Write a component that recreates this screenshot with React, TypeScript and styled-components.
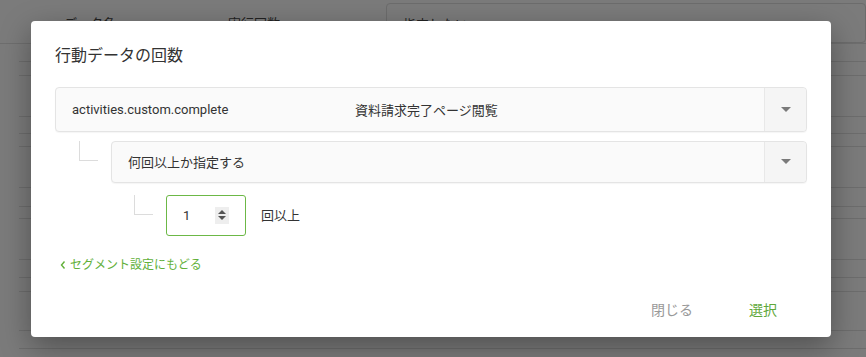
import React from 'react'
import styled, { createGlobalStyle } from 'styled-components'

const GlobalStyle = createGlobalStyle`
    body {
        margin: 0;
        font-family: Roboto, "Noto Sans CJK JP", sans-serif;
        color: #333;
    }
`

const bgLines = [18, 14, 41, 17, 13, 41, 19, 12, 41, 18, 14, 39, 18]

function App() {
    return (
        <Page>
            <GlobalStyle />
            <Backdrop>
                <BgHeader>
                    <BgLabel>データ名</BgLabel>
                    <BgLabel>実行回数</BgLabel>
                    <BgCard>指定しない</BgCard>
                </BgHeader>
                <BgRows>
                    {bgLines.map((h, i) => (
                        <BgRow key={i} $h={h} />
                    ))}
                </BgRows>
            </Backdrop>
            <Overlay>
                <Modal>
                    <Title>行動データの回数</Title>
                    <Select>
                        <SelectValue>
                            <Key>activities.custom.complete</Key>
                            <span>資料請求完了ページ閲覧</span>
                        </SelectValue>
                        <SelectToggle><Caret /></SelectToggle>
                    </Select>
                    <Branch>
                        <Connector $left={24} />
                        <Select $height={42}>
                            <SelectValue>何回以上か指定する</SelectValue>
                            <SelectToggle><Caret /></SelectToggle>
                        </Select>
                    </Branch>
                    <Branch $indent={56} $top={12}>
                        <Connector $left={23} />
                        <NumberBox>
                            <span>1</span>
                            <Spinner>
                                <Arrow $up />
                                <Arrow />
                            </Spinner>
                        </NumberBox>
                        <Unit>回以上</Unit>
                    </Branch>
                    <BackLink>
                        <Chevron viewBox="0 0 8 10">
                            <path d="M5.5 1.5 L2.5 5 L5.5 8.5" fill="none" stroke="currentColor" strokeWidth="1.4" />
                        </Chevron>
                        セグメント設定にもどる
                    </BackLink>
                    <Footer>
                        <TextButton>閉じる</TextButton>
                        <TextButton $primary>選択</TextButton>
                    </Footer>
                </Modal>
            </Overlay>
        </Page>
    )
}

export default App

const Page = styled.div`
    position: relative;
    width: 866px;
    height: 357px;
    overflow: hidden;
    background: #f6f6f6;
`

const Backdrop = styled.div`
    display: flex;
    flex-direction: column;
`

const BgHeader = styled.div`
    display: flex;
    align-items: flex-start;
    height: 44px;
    border-bottom: 1px solid #dcdcdc;
    box-sizing: border-box;
`

const BgLabel = styled.div`
    font-size: 13px;
    color: #444;
    padding: 13px 0 0 64px;
    width: 100px;
`

const BgCard = styled.div`
    margin: 3px 0 0 auto;
    width: 480px;
    height: 40px;
    border: 1px solid #d8d8d8;
    border-radius: 4px;
    font-size: 13px;
    color: #444;
    padding: 10px 16px;
    box-sizing: border-box;
`

const BgRows = styled.div`
    display: flex;
    flex-direction: column;
    margin-left: 19px;
`

const BgRow = styled.div<{ $h: number }>`
    height: ${p => p.$h}px;
    border-bottom: 1px solid #dadada;
    box-sizing: border-box;
`

const Overlay = styled.div`
    position: absolute;
    inset: 0;
    background: rgba(0, 0, 0, 0.5);
    display: flex;
    align-items: center;
    justify-content: center;
    padding-right: 4px;
`

const Modal = styled.div`
    width: 800px;
    height: 316px;
    box-sizing: border-box;
    background: #fff;
    border-radius: 4px;
    box-shadow: 0 10px 30px rgba(0, 0, 0, 0.35);
    padding: 23px 24px 0;
    display: flex;
    flex-direction: column;
`

const Title = styled.h2`
    margin: 0 0 19px;
    font-size: 16px;
    line-height: 24px;
    font-weight: 400;
    color: #333;
`

const Select = styled.div<{ $height?: number }>`
    width: 100%;
    min-width: 0;
    display: flex;
    flex-shrink: 0;
    height: ${p => p.$height ?? 45}px;
    box-sizing: border-box;
    background: #fafafa;
    border: 1px solid #e4e4e4;
    border-radius: 4px;
    box-shadow: 0 1px 1px rgba(0, 0, 0, 0.04);
`

const SelectValue = styled.div`
    flex: 1;
    display: flex;
    align-items: center;
    padding-left: 16px;
    font-size: 13px;
    color: #333;
`

const Key = styled.span`
    width: 283px;
`

const SelectToggle = styled.div`
    width: 41px;
    border-left: 1px solid #e8e8e8;
    background: #f5f5f5;
    border-radius: 0 4px 4px 0;
    display: flex;
    align-items: center;
    justify-content: center;
`

const Caret = styled.span`
    width: 0;
    height: 0;
    border-left: 5px solid transparent;
    border-right: 5px solid transparent;
    border-top: 5px solid #7a7a7a;
`

const Branch = styled.div<{ $indent?: number; $top?: number }>`
    display: flex;
    align-items: flex-start;
    flex-shrink: 0;
    margin: ${p => p.$top ?? 9}px 0 0 ${p => p.$indent ?? 0}px;

    & > ${Select} {
        flex: 1;
    }
`

const Connector = styled.div<{ $left: number }>`
    width: 19px;
    height: 20px;
    margin: 0 ${p => 56 - p.$left - 19}px 0 ${p => p.$left}px;
    border-left: 1px solid #dcdcdc;
    border-bottom: 1px solid #dcdcdc;
    box-sizing: border-box;
    flex-shrink: 0;
`

const NumberBox = styled.div`
    width: 80px;
    height: 41px;
    box-sizing: border-box;
    border: 1px solid #6cb846;
    border-radius: 3px;
    display: flex;
    align-items: center;
    padding: 0 16px;
    justify-content: space-between;
    font-size: 13px;
    color: #333;
    margin-left: -1px;
`

const Spinner = styled.div`
    width: 14px;
    height: 17px;
    background: #eee;
    display: flex;
    flex-direction: column;
    align-items: center;
    justify-content: center;
    gap: 2px;
`

const Arrow = styled.span<{ $up?: boolean }>`
    width: 0;
    height: 0;
    border-left: 4px solid transparent;
    border-right: 4px solid transparent;
    ${p => (p.$up ? 'border-bottom: 4px solid #555;' : 'border-top: 4px solid #555;')}
`

const Unit = styled.span`
    font-size: 13px;
    line-height: 41px;
    margin-left: 15px;
    color: #333;
`

const BackLink = styled.a`
    display: flex;
    align-items: center;
    gap: 3px;
    margin: 20px 0 0 4px;
    font-size: 12px;
    line-height: 18px;
    color: #62b03a;
    cursor: pointer;
`

const Chevron = styled.svg`
    width: 8px;
    height: 10px;
`

const Footer = styled.div`
    margin-top: auto;
    display: flex;
    justify-content: flex-end;
    gap: 4px;
    padding: 0 4px 9px 0;
`

const TextButton = styled.button<{ $primary?: boolean }>`
    border: none;
    background: none;
    font-family: inherit;
    font-size: 14px;
    line-height: 24px;
    padding: 6px 26px;
    color: ${p => (p.$primary ? '#5fa83a' : '#999')};
    cursor: pointer;
`
